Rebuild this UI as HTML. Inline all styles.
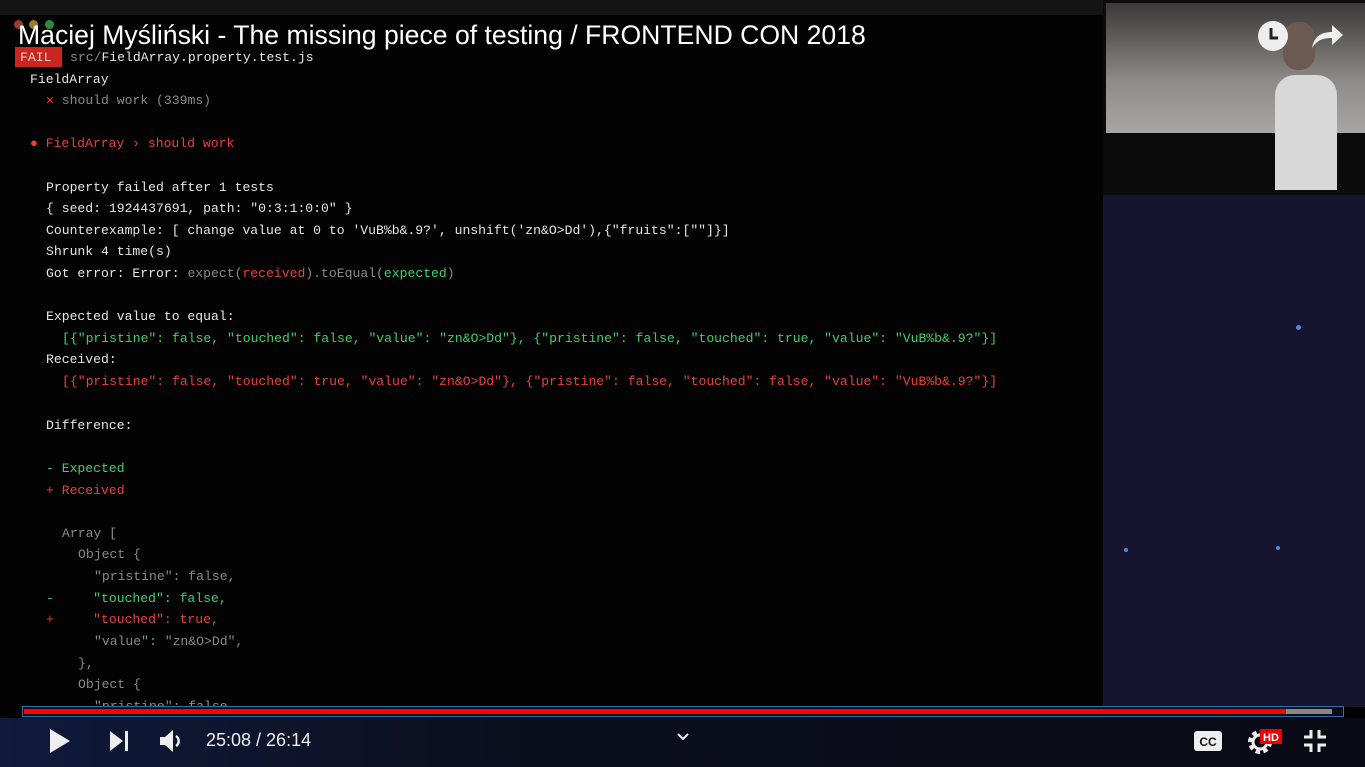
<!DOCTYPE html>
<html><head><meta charset="utf-8"><style>
html,body{margin:0;padding:0;width:1365px;height:767px;overflow:hidden;background:#000;}
.t{position:absolute;font-family:"Liberation Mono",monospace;font-size:13.1px;line-height:20px;white-space:pre;color:#e6e6e6;margin-top:2px}
.g{color:#8a8a8a}.r{color:#e8403a}.gr{color:#3fcf6a}
</style></head><body>
<div style="position:absolute;left:0;top:0;width:1103px;height:15px;background:#141414"></div>
<div style="position:absolute;left:0;top:15px;width:1103px;height:752px;background:#030303"></div>
<div style="position:absolute;left:14px;top:20px;width:9px;height:9px;border-radius:50%;background:#9a3a35"></div>
<div style="position:absolute;left:29px;top:20px;width:9px;height:9px;border-radius:50%;background:#9a7a30"></div>
<div style="position:absolute;left:45px;top:20px;width:9px;height:9px;border-radius:50%;background:#2f8a3a"></div>
<!-- right panel -->
<div style="position:absolute;left:1103px;top:0;width:262px;height:195px;background:#0b0b0b"></div>
<div style="position:absolute;left:1106px;top:3px;width:259px;height:130px;background:linear-gradient(#3a3838,#8e8b88 60%,#a8a5a2)"></div>
<div style="position:absolute;left:1275px;top:75px;width:62px;height:115px;background:#d8d8d8;border-radius:20px 20px 0 0"></div>
<div style="position:absolute;left:1283px;top:22px;width:32px;height:48px;background:#6a5a52;border-radius:15px"></div>
<div style="position:absolute;left:1103px;top:195px;width:262px;height:512px;background:#16142f"></div>
<div style="position:absolute;left:1296px;top:325px;width:5px;height:5px;border-radius:50%;background:#4a8ae0"></div>
<div style="position:absolute;left:1124px;top:548px;width:4px;height:4px;border-radius:50%;background:#4a8ae0"></div>
<div style="position:absolute;left:1276px;top:546px;width:4px;height:4px;border-radius:50%;background:#4a8ae0"></div>
<!-- title -->
<div style="position:absolute;left:18px;top:20px;font-family:'Liberation Sans',sans-serif;font-size:26.6px;color:#fff;white-space:nowrap">Maciej Myśliński - The missing piece of testing / FRONTEND CON 2018</div>
<svg style="position:absolute;left:1257px;top:20px" width="32" height="32"><circle cx="16" cy="16" r="15" fill="#eee"/><path d="M14 8v10h7" stroke="#222" stroke-width="3" fill="none"/></svg>
<svg style="position:absolute;left:1310px;top:22px" width="34" height="28"><path d="M2 26C4 14 12 10 22 10V3l11 10-11 10v-7C13 16 7 18 2 26z" fill="#eee"/></svg>
<!-- terminal -->
<div style="position:absolute;left:15px;top:47px;width:47px;height:20px;background:#c8261f"></div>
<div class="t" style="left:20px;top:46px;color:#f0d0d0">FAIL</div>
<div class="t" style="left:70px;top:46px"><span class="g">src/</span>FieldArray.property.test.js</div>
<div class="t" style="left:30px;top:68px">FieldArray</div>
<div class="t" style="left:46px;top:89px"><span class="r">✕</span> <span class="g">should work (339ms)</span></div>
<div class="t r" style="left:30px;top:132px">● FieldArray › should work</div>
<div class="t" style="left:46px;top:176px">Property failed after 1 tests</div>
<div class="t" style="left:46px;top:197px">{ seed: 1924437691, path: "0:3:1:0:0" }</div>
<div class="t" style="left:46px;top:219px">Counterexample: [ change value at 0 to 'VuB%b&amp;.9?', unshift('zn&amp;O&gt;Dd'),{"fruits":[""]}]</div>
<div class="t" style="left:46px;top:240px">Shrunk 4 time(s)</div>
<div class="t" style="left:46px;top:262px">Got error: Error: <span class="g">expect(</span><span class="r">received</span><span class="g">).toEqual(</span><span class="gr">expected</span><span class="g">)</span></div>
<div class="t" style="left:46px;top:305px">Expected value to equal:</div>
<div class="t gr" style="left:62px;top:327px">[{"pristine": false, "touched": false, "value": "zn&amp;O&gt;Dd"}, {"pristine": false, "touched": true, "value": "VuB%b&amp;.9?"}]</div>
<div class="t" style="left:46px;top:348px">Received:</div>
<div class="t r" style="left:62px;top:370px">[{"pristine": false, "touched": true, "value": "zn&amp;O&gt;Dd"}, {"pristine": false, "touched": false, "value": "VuB%b&amp;.9?"}]</div>
<div class="t" style="left:46px;top:414px">Difference:</div>
<div class="t gr" style="left:46px;top:457px">- Expected</div>
<div class="t r" style="left:46px;top:479px">+ Received</div>
<div class="t g" style="left:62px;top:522px">Array [</div>
<div class="t g" style="left:78px;top:543px">Object {</div>
<div class="t g" style="left:94px;top:565px">"pristine": false,</div>
<div class="t gr" style="left:46px;top:587px">-     "touched": false,</div>
<div class="t r" style="left:46px;top:608px">+     "touched": true,</div>
<div class="t g" style="left:94px;top:630px">"value": "zn&amp;O&gt;Dd",</div>
<div class="t g" style="left:78px;top:652px">},</div>
<div class="t g" style="left:78px;top:673px">Object {</div>
<div class="t g" style="left:94px;top:695px">"pristine": false,</div>
<!-- control bar -->
<div style="position:absolute;left:0;top:718px;width:1365px;height:49px;background:linear-gradient(90deg,#0f1a3c,#0b0e1c 40%,#090a14)"></div>
<div style="position:absolute;left:22px;top:706px;width:1320px;height:9px;border:1px solid #2a6fb0;background:#0c0c14"></div>
<div style="position:absolute;left:24px;top:709px;width:1262px;height:5px;background:#f00"></div>
<div style="position:absolute;left:1286px;top:709px;width:46px;height:5px;background:#888"></div>
<svg style="position:absolute;left:48px;top:728px" width="24" height="26"><path d="M2 1L22 13 2 25z" fill="#eee"/></svg>
<svg style="position:absolute;left:108px;top:730px" width="24" height="22"><path d="M2 1L15 11 2 21z" fill="#eee"/><rect x="17" y="1" width="3" height="20" fill="#eee"/></svg>
<svg style="position:absolute;left:158px;top:728px" width="26" height="26"><path d="M2 9h5l8-7v22l-8-7H2z" fill="#eee"/><path d="M18 8a6 6 0 0 1 0 10" stroke="#eee" stroke-width="2.5" fill="none"/></svg>
<div style="position:absolute;left:206px;top:730px;font-family:'Liberation Sans',sans-serif;font-size:18px;color:#eee">25:08 / 26:14</div>
<svg style="position:absolute;left:676px;top:732px" width="14" height="10"><path d="M2 2l5 5 5-5" stroke="#eee" stroke-width="2" fill="none"/></svg>
<svg style="position:absolute;left:1193px;top:730px" width="30" height="22"><rect x="1" y="1" width="28" height="20" rx="3" fill="#eee"/><text x="15" y="16" font-family="Liberation Sans" font-weight="bold" font-size="12" text-anchor="middle" fill="#111">CC</text></svg>
<svg style="position:absolute;left:1248px;top:728px" width="36" height="28"><circle cx="12" cy="14" r="9" fill="none" stroke="#eee" stroke-width="6" stroke-dasharray="4 3"/><circle cx="12" cy="14" r="7" fill="none" stroke="#eee" stroke-width="3"/><rect x="12" y="1" width="22" height="15" fill="#e00"/><text x="23" y="13" font-family="Liberation Sans" font-weight="bold" font-size="11" text-anchor="middle" fill="#fff">HD</text></svg>
<svg style="position:absolute;left:1302px;top:728px" width="26" height="26"><path d="M9 2v7H2M17 2v7h7M9 24v-7H2M17 24v-7h7" stroke="#eee" stroke-width="3" fill="none"/></svg>
</body></html>
